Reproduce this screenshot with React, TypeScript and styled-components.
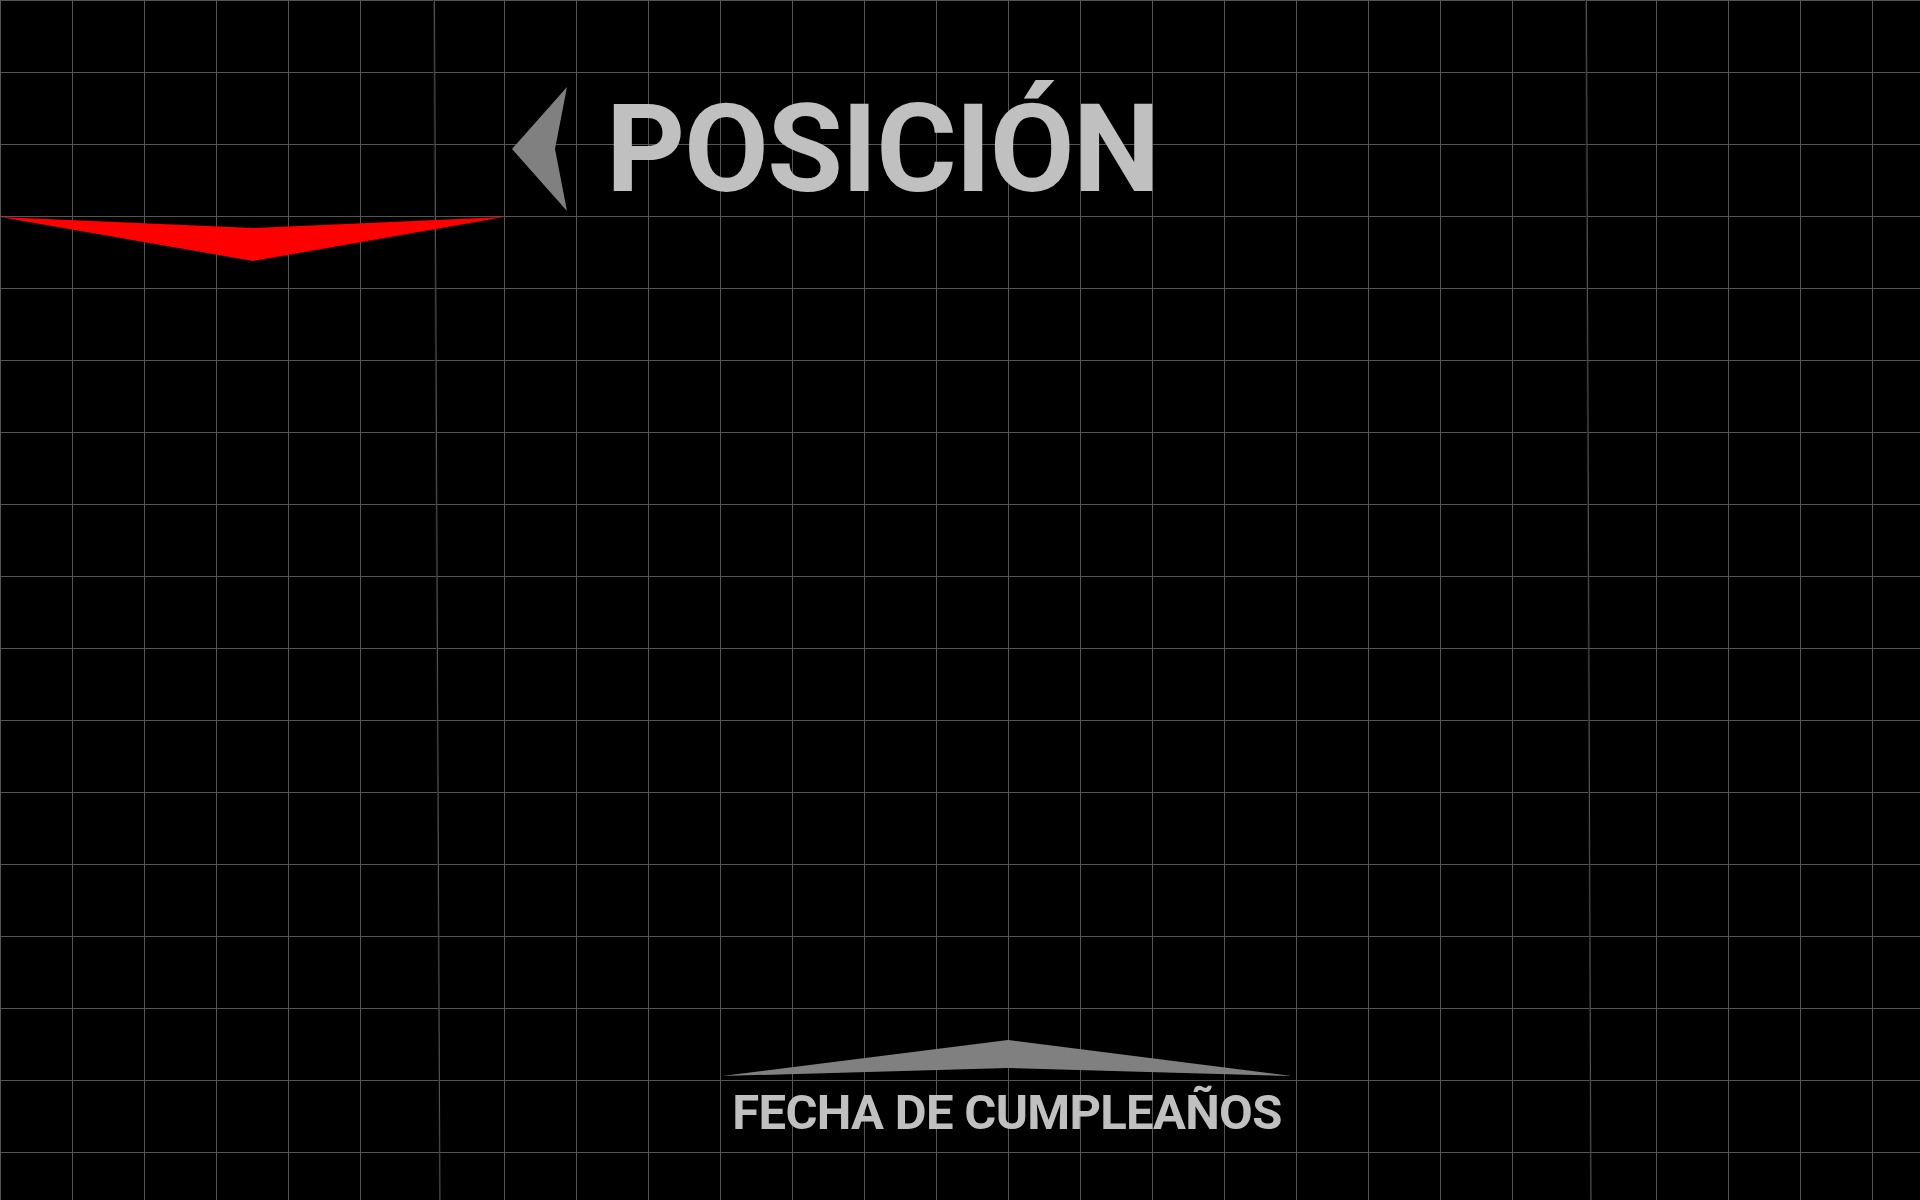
import React from "react";
import styled, { createGlobalStyle } from "styled-components";

const GlobalStyle = createGlobalStyle`
  html, body {
    margin: 0;
    padding: 0;
    background: #000;
    overflow: hidden;
  }
  * { box-sizing: border-box; }
`;

const Page = styled.div`
  position: relative;
  width: 1920px;
  height: 1200px;
  background: #000;
  display: flex;
  flex-direction: column;
  font-family: Roboto, "Liberation Sans", Arial, sans-serif;
  overflow: hidden;
`;

const GridLayer = styled.svg`
  position: absolute;
  inset: 0;
  width: 1920px;
  height: 1200px;
  z-index: 0;
  pointer-events: none;
`;

const Header = styled.header`
  position: relative;
  z-index: 1;
  display: flex;
  align-items: center;
  gap: 39px;
  height: 124px;
  margin-top: 87px;
  padding-left: 512px;
`;

const BackArrow = styled.svg`
  display: block;
  flex: none;
  width: 55px;
  height: 124px;
`;

const Title = styled.h1`
  margin: 0;
  font-family: Roboto, "Liberation Sans", Arial, sans-serif;
  font-weight: 700;
  font-size: 123px;
  line-height: 1;
  color: #c0c0c0;
  letter-spacing: -1.4px;
  white-space: nowrap;
`;

const Banner = styled.svg`
  position: relative;
  z-index: 1;
  display: block;
  width: 504px;
  height: 44px;
  margin-top: 6px;
`;

const Footer = styled.footer`
  position: relative;
  z-index: 1;
  margin-top: auto;
  margin-left: 722px;
  width: 570px;
  padding-bottom: 63px;
  display: flex;
  flex-direction: column;
  align-items: center;
`;

const Peak = styled.svg`
  display: block;
  width: 570px;
  height: 36px;
`;

const Label = styled.div`
  margin-top: 12px;
  font-family: Roboto, "Liberation Sans", Arial, sans-serif;
  font-weight: 700;
  font-size: 49px;
  line-height: 1;
  color: #c0c0c0;
  letter-spacing: -0.7px;
  white-space: nowrap;
`;

const STEP = 72;
const W = 1920;
const H = 1200;
const LINE = "#555555";

function Grid() {
  const rows: number[] = [];
  for (let y = 0; y <= H; y += STEP) rows.push(y);
  const cols: number[] = [];
  for (let x = 0; x <= W; x += STEP) {
    if (x !== 432 && x !== 1584) cols.push(x);
  }
  return (
    <GridLayer viewBox={`0 0 ${W} ${H}`} aria-hidden="true">
      {rows.map((y) => (
        <line key={`r${y}`} x1={0} y1={y + 0.5} x2={W} y2={y + 0.5} stroke={LINE} strokeWidth={1} />
      ))}
      {cols.map((x) => (
        <line key={`c${x}`} x1={x + 0.5} y1={0} x2={x + 0.5} y2={H} stroke={LINE} strokeWidth={1} />
      ))}
      <line x1={433.5} y1={0} x2={439.5} y2={H} stroke="#1c1c1c" strokeWidth={1} />
      <line x1={434.5} y1={0} x2={440} y2={H} stroke={LINE} strokeWidth={1} />
      <line x1={1585.5} y1={0} x2={1590.5} y2={H} stroke="#1c1c1c" strokeWidth={1} />
      <line x1={1586.5} y1={0} x2={1591} y2={H} stroke={LINE} strokeWidth={1} />
    </GridLayer>
  );
}

export default function App() {
  return (
    <>
      <GlobalStyle />
      <Page>
        <Grid />
        <Header>
          <BackArrow viewBox="0 0 55 124" aria-hidden="true">
            <polygon points="55,0 0,62 55,124 43,62" fill="#808080" />
          </BackArrow>
          <Title>POSICIÓN</Title>
        </Header>
        <Banner viewBox="0 0 504 44" aria-hidden="true">
          <polygon points="0,0 253,11 504,0 253,44" fill="#ff0000" />
        </Banner>
        <Footer>
          <Peak viewBox="0 0 570 36" aria-hidden="true">
            <polygon points="0,36 286,0 570,36 286,28" fill="#808080" />
          </Peak>
          <Label>FECHA DE CUMPLEAÑOS</Label>
        </Footer>
      </Page>
    </>
  );
}
